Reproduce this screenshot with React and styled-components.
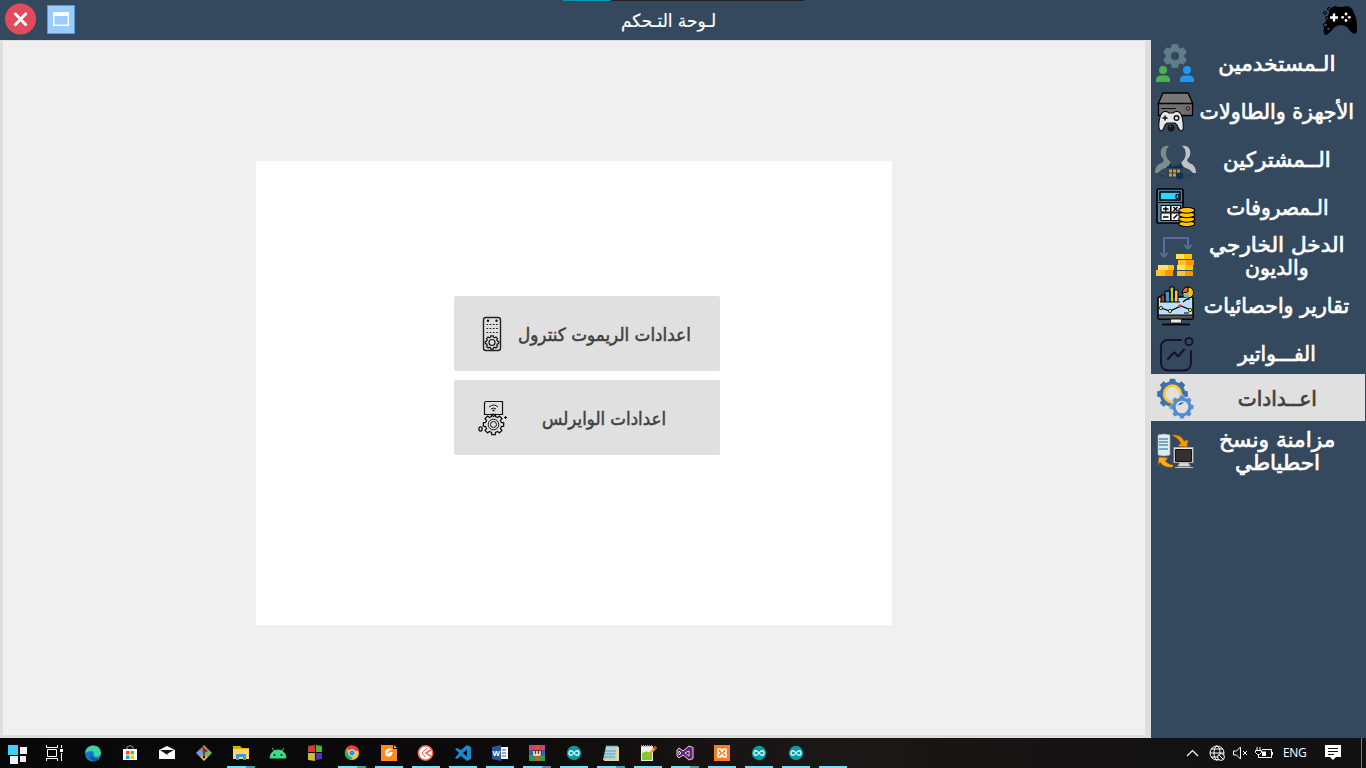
import React from "react";
import styled, { createGlobalStyle } from "styled-components";

const Global = createGlobalStyle`
  * { box-sizing: border-box; }
  body { margin: 0; overflow: hidden; background: #f0f0f0; font-family: "DejaVu Sans", "Noto Sans", sans-serif; }
  svg { display: block; flex: none; }
`;

const Screen = styled.div`
  width: 1366px;
  height: 768px;
  display: flex;
  flex-direction: column;
  direction: ltr;
`;

const TitleBar = styled.header`
  position: relative;
  height: 40px;
  flex: none;
  background: #34495e;
  display: grid;
  grid-template-columns: 619px 100px 1fr;
  align-items: center;
`;

const LoadStrip = styled.i`
  position: absolute;
  left: 563px;
  top: 0;
  width: 241px;
  height: 1px;
  background: linear-gradient(90deg, #0099bc 48px, #222 48px);
`;

const WindowButtons = styled.div`
  display: flex;
  gap: 10px;
  padding-left: 4px;
  height: 40px;
  align-items: center;
`;

const Title = styled.h1`
  margin: 0;
  display: flex;
  justify-content: center;
  color: #fff;
  font-size: 18px;
  font-weight: 400;
  -webkit-text-stroke: 0.2px currentColor;
`;

const Stretch = styled.span`
  display: block;
  white-space: nowrap;
  direction: rtl;
  transform: translateY(${(p) => p.$dy || 0}px) scaleX(${(p) => p.$x || 1});
`;

const Brand = styled.div`
  justify-self: end;
  padding-right: 8px;
`;

const Main = styled.main`
  flex: 1;
  min-height: 0;
  display: flex;
`;

const Workspace = styled.section`
  width: 1151px;
  background: #f0f0f0;
  border: solid #dedede;
  border-width: 1px 6px 3px 3px;
  display: flex;
  padding: 120px 0 0 253px;
`;

const Panel = styled.div`
  width: 636px;
  height: 464px;
  background: #fff;
  display: flex;
  flex-direction: column;
  gap: 9px;
  padding: 135px 0 0 198px;
`;

const OptionButton = styled.button`
  width: 266px;
  height: 75px;
  border: 0;
  border-radius: 2px;
  padding: 0 21px 0 20px;
  background: #e0e0e0;
  color: #3f3f41;
  display: flex;
  align-items: center;
  font: 18px "DejaVu Sans", sans-serif;
  -webkit-text-stroke: 0.5px currentColor;
`;

const OptionLabel = styled.span`
  flex: 1;
  display: flex;
  justify-content: center;
`;

const Sidebar = styled.nav`
  width: 215px;
  background: #34495e;
`;

const NavItem = styled.a`
  height: ${(p) => p.$height}px;
  width: 214px;
  display: flex;
  align-items: center;
  padding-left: 4px;
  color: ${(p) => (p.$active ? "#3f3f41" : "#fff")};
  background: ${(p) => (p.$active ? "#e0e0e0" : "transparent")};
  font-size: 21px;
  line-height: 23px;
  -webkit-text-stroke: 0.7px currentColor;
`;

const NavLabel = styled.span`
  width: 160px;
  display: flex;
  flex-direction: column;
  align-items: center;
`;

const Taskbar = styled.footer`
  height: 30px;
  flex: none;
  background: linear-gradient(90deg, #080808 0, #0c0a0a 500px, #171413 720px, #1b1817 850px, #151313 1050px, #111 100%);
  display: flex;
  justify-content: space-between;
`;

const Apps = styled.div`
  display: flex;
`;

const AppSlot = styled.div`
  width: 37px;
  height: 30px;
  display: flex;
  flex-direction: column;
  align-items: center;
  justify-content: space-between;
  padding-top: 7px;
`;

const Running = styled.i`
  width: 28px;
  height: 2px;
  background: ${(p) =>
    p.$state === "many"
      ? "linear-gradient(90deg, #76dffb 19px, #5197a9 19px)"
      : p.$state === "one"
      ? "#76dffb"
      : "transparent"};
`;

const Tray = styled.div`
  display: flex;
  align-items: center;
  width: 180px;
  color: #fff;
  font: 12px "Open Sans", sans-serif;
  padding-bottom: 1px;
`;

const Lang = styled.span`
  width: 24px;
  margin: 0 17px 0 10px;
  font-size: 12px;
  letter-spacing: -0.4px;
`;

const DeskEdge = styled.i`
  width: 1px;
  height: 30px;
  margin-left: 19px;
  background: #777;
`;

const gearPath = (cx, cy, r, depth, teeth) => {
  const pts = [];
  for (let i = 0; i < teeth; i++) {
    [[-0.32, r - depth], [-0.22, r], [0.22, r], [0.32, r - depth]].forEach(([o, d]) => {
      const a = ((i + o) / teeth) * Math.PI * 2 - Math.PI / 2;
      pts.push(`${(cx + Math.cos(a) * d).toFixed(2)} ${(cy + Math.sin(a) * d).toFixed(2)}`);
    });
  }
  return `M${pts.join("L")}Z`;
};

const Svg = ({ w = 42, h = 44, children }) => (
  <svg width={w} height={h} viewBox={`0 0 ${w} ${h}`} fill="none">{children}</svg>
);

const UsersIcon = () => (
  <Svg>
    <path d={gearPath(20, 14, 11.4, 2.6, 6)} fill="#607d8b" stroke="#607d8b" strokeWidth="1.5" strokeLinejoin="round" />
    <circle cx="20" cy="14" r="4.2" fill="#34495e" />
    <circle cx="8" cy="28" r="4" fill="#4caf50" />
    <path d="M1 40v-2q0-4 4-4.5h6q4 .5 4 4.5v2z" fill="#4caf50" />
    <circle cx="32" cy="28" r="4" fill="#2196f3" />
    <path d="M25 40v-2q0-4 4-4.5h6q4 .5 4 4.5v2z" fill="#2196f3" />
  </Svg>
);

const ConsoleIcon = () => (
  <Svg>
    <path d="M8 3h25l5 11H3z" fill="#777" stroke="#000" strokeWidth="1.3" />
    <path d="M3.5 13.5h34v12h-34z" fill="#707070" stroke="#000" strokeWidth="1.3" />
    <path d="M6 18.5h15" stroke="#111" />
    <circle cx="33" cy="18.5" r="1.7" fill="#f45b83" stroke="#111" />
    <path d="M8 22q3-1.5 6 1h4q3-2.500 6-1 3 2 4 10 1 8-1 9-3 0-5-6l-2-2h-8l-2 2q-2 6-4 6-3-1-2-9t4-10z" fill="#e7e7e7" stroke="#111" strokeWidth="1.2" />
    <path d="M7.5 28h5M10 25.5v5" stroke="#111" strokeWidth="1.5" />
    <circle cx="21.5" cy="28" r="2.3" stroke="#111" strokeWidth="1.4" />
    <circle cx="16" cy="38" r="3.5" fill="#151515" />
    <path d="M15 37l1-1" stroke="#aaa" />
  </Svg>
);

const SubscribersIcon = () => (
  <Svg>
    <path d="M4 35q1 3 6 3h22q5 0 6-3" stroke="#273c50" strokeWidth="1.2" />
    <path d="M14 8Q9 7 6.500 11 4 17 9 22q-1 3-5 4-4 3-4 9h3q3-4 7-5 5-1 5.500-6-5-4-4.500-10 .5-4 3-6z" fill="#7f8c8d" />
    <path d="M27 8q5-1 7.500 3 2.500 6-2.500 11 1 3 5 4 4 3 4 9h-3q-3-4-7-5-4-1-4.500-6 5-4 4-10-.5-4-3.500-6z" fill="#bdc3c7" />
    <path d="M12 28h16v12H12z" fill="#294256" />
    <path d="M14 33h11M14 37h11" stroke="#f28b1d" strokeWidth="3" strokeDasharray="3 1" />
    <path d="M12 29h16M15 26v4M24.500 26v4" stroke="#0f334e" strokeWidth="2" />
    <path d="M21 35h7v6h-5q-2 0-2-2z" fill="#0b3557" />
  </Svg>
);

const ExpensesIcon = () => (
  <Svg>
    <rect x="2" y="3" width="26" height="34" rx="1.5" fill="#557f9f" stroke="#000" strokeWidth="1.7" />
    <path d="M5 6h20v8H5z" fill="#2bd7ff" stroke="#000" strokeWidth="1.5" />
    <path d="M2 16.5h26" stroke="#000" />
    <text x="20" y="12.5" fontFamily="DejaVu Sans" fontWeight="bold" fontSize="7" fill="#000">0</text>
    <path d="M6 19.5h9.5V26H6zM16 19.5h9.5V26H16zM6 27h9.5v7.500H6zM16 27h9.500v7.500H16z" fill="#f5f5f5" stroke="#000" />
    <path d="M8 23h5.5M10.700 20.500v5M8 31h5.500M18.500 21l4 4M22.500 21l-4 4M18.500 32.500l4-4" stroke="#000" strokeWidth="1.4" />
    {[36.5, 32, 27.5, 23].map((y) => (
      <path key={y} d={`M24 ${y}q8-3.500 15.500 0v2.500q-7.500 3.500-15.500 0z`} fill="#ffc400" stroke="#000" strokeWidth="1.200" />
    ))}
  </Svg>
);

const IncomeIcon = () => (
  <Svg>
    <path d="M9 21V3h24v10" stroke="#5c6b9c" strokeWidth="2" />
    <path d="M6 18.5L9 21.5l3-3M30 10.5L33 13.5l3-3" stroke="#5c6b9c" strokeWidth="2.2" strokeLinecap="round" />
    <path d="M3 30h16v5H3z" fill="#ffe066" /><path d="M13 30h6v5h-6z" fill="#ffc400" />
    <path d="M1 35h17v6H1z" fill="#ffc22b" /><path d="M10 35h8v6h-8z" fill="#ff9800" />
    {[[21, 19], [23, 25], [22, 30], [22, 36]].map(([x, y], i) => (
      <g key={y}><path d={`M${x} ${y}h16v5H${x}z`} fill={i % 2 ? "#ffc22b" : "#ffe066"} /><path d={`M${x + 8} ${y}h8v5h-8z`} fill={i % 2 ? "#ff9800" : "#ffc400"} /></g>
    ))}
  </Svg>
);

const ReportsIcon = () => (
  <Svg>
    <rect x="3" y="13" width="35" height="22" rx="1.5" fill="#bbdefb" stroke="#000" strokeWidth="1.6" />
    <path d="M3 31h35v4H3z" fill="#555" stroke="#000" />
    <path d="M16 35h10l1 4H15z" fill="#eee" stroke="#222" /><path d="M7 40.5h28" stroke="#000" strokeWidth="1.7" />
    <path d="M6 11h4v7H6z" fill="#a3391f" /><path d="M10 8h4v10h-4z" fill="#4295bb" /><path d="M15 3h3v15h-3z" fill="#bfcc31" /><path d="M20 6h3v12h-3z" fill="#ffc15a" />
    <path d="M6 18v-7h4v7M10 18V7h5v11M15 18V3h4v15M19 18V6h4v12M5 18h20" stroke="#000" strokeWidth="1" />
    <circle cx="33" cy="8.5" r="5.5" fill="#ffc400" stroke="#000" /><path d="M33 8V3q-5 0-6 6z" fill="#f06335" stroke="#000" /><path d="M33 8l-5 4q3 3 6 1z" fill="#55c5df" />
    <path d="M6 24l9 3 11-5 10 4M28 18q4-4 7-3M29 29h5" stroke="#000" strokeWidth="1.2" />
    <g fill="#dce830" stroke="#000" strokeWidth=".7"><circle cx="6" cy="24" r="1.7"/><circle cx="15" cy="27" r="1.7"/><circle cx="35" cy="26" r="1.7"/></g><circle cx="25" cy="22" r="1.7" fill="#e33" />
  </Svg>
);

const InvoiceIcon = () => (
  <Svg>
    <path d="M26 10H13Q6 10 6 17.5v15q0 8 8 8h14q8 0 8-8V21" stroke="#1c1035" strokeWidth="2.1" strokeLinecap="round" />
    <circle cx="34" cy="11.5" r="3.6" stroke="#1c1035" strokeWidth="2" />
    <path d="M13 29l5.500-6q1.500-1 2 .5l1.500 2q1 1.500 2 0l5-6" stroke="#1c1035" strokeWidth="2.2" strokeLinecap="round" strokeLinejoin="round" />
  </Svg>
);

const SettingsIcon = () => (
  <Svg>
    <path d={gearPath(17.5, 18, 15.5, 2.6, 8)} fill="#3d71ad" />
    <circle cx="17.5" cy="18" r="8.3" stroke="#ffc72c" strokeWidth="2.8" fill="#e0e0e0" />
    <path d={gearPath(27, 31, 12, 2.2, 8)} fill="#508dd6" stroke="#e0e0e0" strokeWidth=".5" />
    <circle cx="27" cy="31" r="6.3" fill="#e0e0e0" /><path d="M23 29.5q2-4 6-3l-3 2z" fill="#355e9c" />
  </Svg>
);

const SyncIcon = () => (
  <Svg>
    <path d="M3 4q6-2 12 0v20q-6 2-12 0z" fill="#e1ebed" stroke="#90a6ad" strokeWidth=".7" />
    <path d="M4 8h9M4 11h9M4 14h9M4 18h9" stroke="#4197bc" strokeWidth="1.4" />
    <path d="M17 4q9-1 12 6l4-1-1 7-9-1 3-3q-3-5-9-8z" fill="#f39a08" stroke="#a96301" strokeWidth=".5" />
    <path d="M4 26l9 1-3 3q4 4 8 4v2q-10 1-13-5l-2 3z" fill="#ffab19" stroke="#b46400" strokeWidth=".5" />
    <rect x="19" y="16.5" width="19" height="15" fill="#e8e8e5" stroke="#aaa" /><path d="M20.5 18.5h16v12h-16z" fill="#363033" stroke="#111" />
    <path d="M25 32h8l2 3H23zM20 36.5h18" fill="#ddd" stroke="#bfc2bd" />
  </Svg>
);

const RemoteIcon = () => (
  <Svg w={36} h={38}>
    <path d="M2 8l6-6M2 16l6-6M2 24l6-6M2 32l6-6M28 8l6-6M28 16l6-6M28 24l6-6M28 32l6-6" stroke="#d4d4d4" />
    <rect x="9.5" y="2.5" width="17" height="33" rx="2.5" stroke="#222" strokeWidth="1.4" />
    <circle cx="14" cy="5.7" r="1.2" fill="#111" /><circle cx="22.5" cy="5.7" r="1.2" fill="#111" />
    <path d="M12.5 9.5h12M12.5 13.5h12M12.5 17.5h12" stroke="#222" strokeDasharray="1.7 1.5" />
    <path d={gearPath(18, 27.5, 6.8, 1.3, 8)} stroke="#111" strokeWidth="1.2" /><circle cx="18" cy="27.5" r="3" stroke="#111" strokeWidth="1.2" />
  </Svg>
);

const WirelessIcon = () => (
  <Svg w={36} h={38}>
    <path d="M17 15.5h-6.5V4q0-1.500 2-1.500h16v13h-6.500l-2.500 2z" stroke="#111" strokeWidth="1.2" />
    <path d="M15 8q5-4 9 0M17 10q2.5-2 5 0" stroke="#111" /><circle cx="19.5" cy="11.5" r="1" fill="#111" />
    <path d={gearPath(19.5, 25.5, 10.3, 2.2, 8)} stroke="#111" strokeWidth="1.3" />
    <circle cx="19.5" cy="25.5" r="5.3" stroke="#111" /><circle cx="19.5" cy="25.5" r="3" stroke="#111" />
    <path d="M31.5 17v3M30 18.5h3" stroke="#111" /><ellipse cx="6.5" cy="30" rx="1.6" ry="2.1" stroke="#111" strokeWidth="1.3" />
  </Svg>
);

const navigation = [
  { height: 48, Icon: UsersIcon, lines: [["الـمستخدمين", 1.03]] },
  { height: 48, Icon: ConsoleIcon, lines: [["الأجهزة والطاولات", 0.98]] },
  { height: 48, Icon: SubscribersIcon, lines: [["الــمشتركين", 1.02]] },
  { height: 48, Icon: ExpensesIcon, lines: [["الـمصروفات", 0.96]] },
  { height: 49, Icon: IncomeIcon, lines: [["الدخل الخارجي", 1.03], ["والديون", 0.97]] },
  { height: 49, Icon: ReportsIcon, lines: [["تقارير واحصائيات", 0.975]], dy: 1 },
  { height: 44, Icon: InvoiceIcon, lines: [["الفـــواتير", 0.95]], dy: 2 },
  { height: 47, Icon: SettingsIcon, lines: [["اعــدادات", 0.96]], dy: 2, active: true },
  { height: 63, Icon: SyncIcon, lines: [["مزامنة ونسخ", 1.035], ["احطياطي", 1.025]], dy: -1 },
];

const Arduino = () => <Svg w={18} h={16}><circle cx="9" cy="8" r="7.2" fill="#089ba3"/><path d="M9 8C7 5 4 5 4 8s3 3 5 0 5-3 5 0-3 3-5 0z" stroke="#d8ffff" strokeWidth="1.3"/></Svg>;

const taskIcons = [
  <Svg w={24} h={20}><path d="M1 0h10v10H1z" fill="#45cdf6"/><path d="M13 2h7v7h-7zM3 11h8v8H3zM13 11h6v6h-6z" fill="#eef1fb"/></Svg>,
  <Svg w={20} h={17}><path d="M.5 0v2.5h11V0M.5 16v-2.5h11V16M1.5 4.5h9v7h-9zM15.5 0v3M15.5 8v8" stroke="#fff"/><path d="M14 4h3v3h-3z" fill="#fff"/></Svg>,
  <Svg w={18} h={17}><circle cx="9" cy="8.5" r="8" fill="#127bc9"/><path d="M1 8Q2 1 9 .5q7 0 8 7 0 5-6 4-2-1-1-3Q9 4 1 8z" fill="#3bd5a1"/><path d="M8 7q-3 4 2 6l5 1q-5 4-8 0-2-4 1-7z" fill="#11549c"/></Svg>,
  <Svg w={16} h={17}><path d="M5 5V2q3-3 6 0v3" stroke="#999"/><path d="M1 4h14v11H1z" fill="#fff"/><path d="M4 6h3.5v3.5H4z" fill="#f35325"/><path d="M8.5 6H12v3.5H8.5z" fill="#81bc06"/><path d="M4 10.5h3.5V14H4z" fill="#05a6f0"/><path d="M8.5 10.5H12V14H8.5z" fill="#ffba08"/></Svg>,
  <Svg w={18} h={16}><path d="M1 5l8-4 8 4v9H1z" fill="#fff"/><path d="M2 5h14L9 9l2 2z" fill="#111"/></Svg>,
  <Svg w={18} h={17}><path d="M9 0l4 4-4 4-4-4z" fill="#f06d61"/><path d="M13 4l4 4-4 4-4-4z" fill="#79b766"/><path d="M5 4l4 4-4 4-4-4z" fill="#719bec"/><path d="M9 8l4 4-4 4-4-4z" fill="#edc85d"/><path d="M7 2l5 5M9 4v8" stroke="#432" strokeWidth="1.4"/><circle cx="9" cy="12" r="1.5" fill="#322"/></Svg>,
  <Svg w={18} h={16}><path d="M1 1h7l2 2h7v11H1z" fill="#e6a700"/><path d="M1 4h16v10H1z" fill="#ffd665"/><path d="M4 9h10v6h-3v-3H7v3H4z" fill="#369ae0"/></Svg>,
  <Svg w={18} h={16}><path d="M1 13a8 8 0 0116 0zM3 3l3 4M15 3l-3 4" fill="#3ddc84" stroke="#3ddc84"/><circle cx="5.5" cy="10" r="1" fill="#111"/><circle cx="12.5" cy="10" r="1" fill="#111"/></Svg>,
  <Svg w={18} h={16}><path d="M2 1l7-1v7H2z" fill="#d23a3c"/><path d="M10 0l6 1v6h-6z" fill="#4cb828"/><path d="M2 8h7v8l-7-1z" fill="#c5bd32"/><path d="M10 8h6v6l-6 1z" fill="#5a2ec2"/></Svg>,
  <Svg w={18} h={16}><circle cx="9" cy="8" r="7" fill="#fbc116"/><path d="M3 4a7 7 0 0113 2H9z" fill="#ea4335"/><path d="M3 4a7 7 0 005 11l3-6-5 1z" fill="#34a853"/><circle cx="9" cy="8" r="3.3" fill="#4285f4" stroke="#eee"/></Svg>,
  <Svg w={17} h={17}><path d="M1 0h12v4h4v12H1z" fill="#ff8b19"/><path d="M14 0l3 3h-3z" fill="#ffb369"/><path d="M13 4Q6 2 5 7q-1 6 6 4l2-4h-3l-2 2q-1-3 5-5z" fill="#fff"/></Svg>,
  <Svg w={17} h={17}><circle cx="8.5" cy="8" r="7.2" fill="#fff" stroke="#f26440" strokeWidth="1.5"/><path d="M14 5L9 8l5 3.5" stroke="#f26440" strokeWidth="1.5"/><path d="M10 3L5 8l3 4" stroke="#f26440"/></Svg>,
  <Svg w={18} h={17}><path d="M13 0l4 2v12l-4 2-6-5-4 3-2-1 4-5-4-4 2-1 4 2zM13 4.5L9 8l4 3.5z" fill="#168bd2" fillRule="evenodd"/></Svg>,
  <Svg w={18} h={16}><path d="M9 2h8v12H9z" fill="#fff"/><path d="M1 2l9-2v16l-9-2z" fill="#2b579a"/><path d="M11 5h4M11 8h4M11 11h4" stroke="#2b579a"/><text x="1.5" y="11" fontFamily="Liberation Sans" fontSize="8" fontWeight="bold" fill="#fff">W</text></Svg>,
  <Svg w={18} h={16}><path d="M1 0h16v5H1z" fill="#d43c78"/><path d="M1 5h16v5H1z" fill="#3763ad"/><path d="M1 10h16v6H1z" fill="#2d9c4c"/><path d="M7 0h4v16H7z" fill="#d35b20"/><path d="M5 5h9v6H5z" fill="#782e28"/><path d="M6 6v4h6V6M9 6v4" stroke="#fff" strokeWidth="1.4"/></Svg>,
  <Arduino />,
  <Svg w={18} h={17}><path d="M4 1h12l-2 14H1z" fill="#a9d8df"/><path d="M14 2h3v14H2v-1h12z" fill="#e9d4a1"/><path d="M4 1h12M3 6h11M2 9h11M2 12h11" stroke="#548b9b" strokeDasharray="2 .5"/></Svg>,
  <Svg w={18} h={17}><path d="M2 1h12v15H2z" fill="#eee"/><path d="M2 1h12" stroke="#aaa" strokeWidth="2" strokeDasharray="1 1"/><path d="M3 8q5-3 10 0v7H3z" fill="#79cc29"/><path d="M8 10L16 1l2 2-8 8z" fill="#e8a32d"/><path d="M15 2l2 2" stroke="#d33" strokeWidth="2"/></Svg>,
  <Svg w={18} h={17}><path d="M1 5l2-2 4 3 6-5 4 1.5v11L13 15l-6-5-4 3-2-2zM3 6v4l2-2zM13 6L9 8l4 3z" fill="#68217a" fillRule="evenodd" stroke="#eee" strokeWidth=".9"/></Svg>,
  <Svg w={17} h={17}><path d="M1 0h16v16H1z" fill="#fb7a24"/><path d="M5 4h2.500l1.500 2.500L10.500 4H13v3l-1.500 1L13 9v3h-2.500L9 9.500 7.500 12H5V9l1.500-1L5 7z" stroke="#fff" strokeWidth="1.7" strokeLinejoin="round"/></Svg>,
  <Arduino />,
  <Arduino />,
  null,
];
const states = ["", "", "", "", "", "", "many", "", "", "many", "one", "one", "one", "one", "many", "one", "many", "one", "many", "one", "one", "one", "one"];

export default function App() {
  return (
    <Screen>
      <Global />
      <TitleBar>
        <LoadStrip />
        <WindowButtons>
          <Svg w={32} h={38}><circle cx="16.5" cy="18" r="15.5" fill="#e24b5c"/><path d="M10.500 12l12 12.500M22.500 12l-12 12.500" stroke="#fff" strokeWidth="2.9"/></Svg>
          <Svg w={30} h={38}><rect x="1.5" y="4.5" width="27" height="28" fill="#99ccff" stroke="#5b9bd5"/><path d="M7 11h16v14H7z" fill="#fff"/><path d="M8.5 15h13v8.5h-13z" fill="#99ccff"/></Svg>
        </WindowButtons>
        <Title><Stretch $x={0.94}>لـوحة التـحكم</Stretch></Title>
        <Brand>
          <Svg w={37} h={36}>
            <path d="M10 6l4-2q6 2 11 0 6 0 8 7 4 9 3 18-1 5-6 1l-4-5q-6-4-12 0l-6 6q-4 4-5 0-1-6 2-12z" fill="#000"/>
            <path d="M9 15.5h8M13 11.5v8" stroke="#fff" strokeWidth="2.4"/>
            <g fill="#fff"><circle cx="25" cy="12" r="1.4"/><circle cx="25" cy="18.5" r="1.4"/><circle cx="21.6" cy="15.3" r="1.4"/><circle cx="28.3" cy="15.3" r="1.4"/></g>
            <g stroke="#000" fill="#34495e"><circle cx="4" cy="11" r="1.5"/><circle cx="8" cy="7" r="1.5"/><circle cx="6" cy="16" r="1.5"/><circle cx="4.5" cy="23" r="2"/><circle cx="7.5" cy="27" r="1.8"/><circle cx="4" cy="29" r="1"/></g>
          </Svg>
        </Brand>
      </TitleBar>
      <Main>
        <Workspace>
          <Panel>
            <OptionButton><RemoteIcon /><OptionLabel><Stretch $x={0.935} $dy={1}>اعدادات الريموت كنترول</Stretch></OptionLabel></OptionButton>
            <OptionButton><WirelessIcon /><OptionLabel><Stretch $x={0.925} $dy={1}>اعدادات الوايرلس</Stretch></OptionLabel></OptionButton>
          </Panel>
        </Workspace>
        <Sidebar>
          {navigation.map(({ height, Icon, lines, active, dy }) => (
            <NavItem key={lines[0][0]} $height={height} $active={active}>
              <Icon />
              <NavLabel>{lines.map(([text, x]) => <Stretch key={text} $x={x} $dy={dy}>{text}</Stretch>)}</NavLabel>
            </NavItem>
          ))}
        </Sidebar>
      </Main>
      <Taskbar>
        <Apps>{taskIcons.map((icon, i) => <AppSlot key={i}>{icon || <span />}<Running $state={states[i]} /></AppSlot>)}</Apps>
        <Tray>
          <Svg w={15} h={16}><path d="M1 11l5.5-5.5L12 11" stroke="#fff" strokeWidth="1.2"/></Svg>
          <Svg w={24} h={18}><circle cx="16" cy="9" r="7" stroke="#fff"/><ellipse cx="16" cy="9" rx="3" ry="7" stroke="#fff"/><path d="M9 9h14M10 5h12M10 13h12" stroke="#fff"/><circle cx="20" cy="13" r="3.4" fill="#111" stroke="#fff"/><path d="M18 11l4 4" stroke="#fff"/></Svg>
          <Svg w={24} h={16}><path d="M8.5 6h3l4-4v12l-4-4h-3zM18 6l4 4M22 6l-4 4" stroke="#fff"/></Svg>
          <Svg w={24} h={16}><path d="M13 4.5h9.500v8H9.500V10M23.500 7v3M8 2v3M11 2v3M6.500 5.500h6v2l-2 2h-2l-2-2zM9.500 9v3" stroke="#fff"/><path d="M13 6.500h4V11h-4z" fill="#fff"/></Svg>
          <Lang>ENG</Lang>
          <Svg w={18} h={18}><path d="M1 1h16v12h-5l-3 3-3-3H1z" fill="#fff"/><path d="M4 4.5h10M4 7.5h10M4 10.5h6" stroke="#111"/></Svg>
          <DeskEdge />
        </Tray>
      </Taskbar>
    </Screen>
  );
}
